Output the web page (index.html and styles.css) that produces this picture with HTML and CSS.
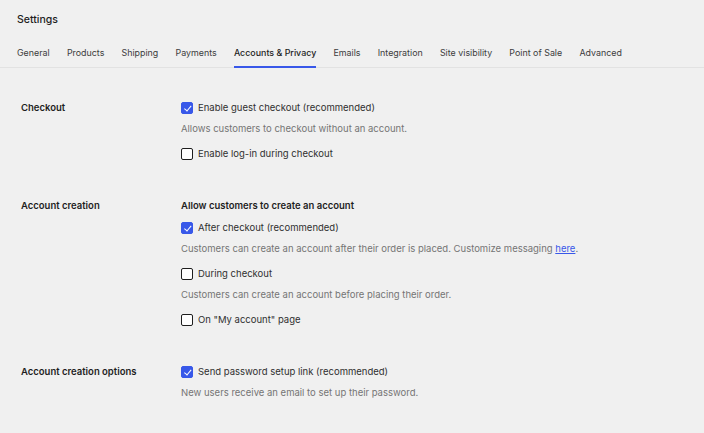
FILE: index.html
```html
<!DOCTYPE html>
<html>
<head>
<meta charset="utf-8">
<link rel="stylesheet" href="styles.css">
</head>
<body>
<header class="header">
  <h1 class="title">Settings</h1>
  <nav class="tabs">
    <a class="tab">General</a>
    <a class="tab">Products</a>
    <a class="tab">Shipping</a>
    <a class="tab">Payments</a>
    <a class="tab active">Accounts &amp; Privacy</a>
    <a class="tab">Emails</a>
    <a class="tab">Integration</a>
    <a class="tab">Site visibility</a>
    <a class="tab">Point of Sale</a>
    <a class="tab">Advanced</a>
  </nav>
</header>
<main class="content">
  <section class="row">
    <div class="label">Checkout</div>
    <div class="fields">
      <label class="check"><span class="box on"></span>Enable guest checkout (recommended)</label>
      <p class="desc">Allows customers to checkout without an account.</p>
      <label class="check"><span class="box"></span>Enable log-in during checkout</label>
    </div>
  </section>
  <section class="row">
    <div class="label">Account creation</div>
    <div class="fields">
      <div class="subhead">Allow customers to create an account</div>
      <label class="check"><span class="box on"></span>After checkout (recommended)</label>
      <p class="desc">Customers can create an account after their order is placed. Customize messaging <a class="link">here</a>.</p>
      <label class="check"><span class="box"></span>During checkout</label>
      <p class="desc">Customers can create an account before placing their order.</p>
      <label class="check"><span class="box"></span>On "My account" page</label>
    </div>
  </section>
  <section class="row">
    <div class="label">Account creation options</div>
    <div class="fields">
      <label class="check"><span class="box on"></span>Send password setup link (recommended)</label>
      <p class="desc">New users receive an email to set up their password.</p>
    </div>
  </section>
</main>
</body>
</html>
```
FILE: styles.css
```css
html, body {
  margin: 0;
  padding: 0;
  background: #f0f0f0;
  font-family: Inter, "Noto Sans", sans-serif;
  color: #1e1e1e;
}
.header {
  border-bottom: 1px solid #e2e2e2;
  padding: 0 17px;
}
.title {
  margin: 0;
  padding-top: 13px;
  height: 27px;
  font-size: 10.5px;
  font-weight: 500;
  line-height: 14px;
}
.tabs {
  display: flex;
  gap: 17.2px;
}
.tab {
  font-size: 8.9px;
  color: #3c3c3c;
  line-height: 12px;
  padding: 7px 0 7px;
  border-bottom: 2px solid transparent;
  margin-bottom: -1px;
}
.tab.active {
  color: #1e1e1e;
  font-weight: 500;
  border-bottom-color: #3858e9;
}
.content {
  padding: 30px 21px 0;
}
.row {
  display: flex;
  margin-bottom: 32px;
}
.label {
  width: 160px;
  font-size: 9.5px;
  font-weight: 600;
  line-height: 14px;
  padding-top: 3px;
}
.fields {
  display: flex;
  flex-direction: column;
}
.subhead {
  font-size: 9.5px;
  font-weight: 600;
  line-height: 14px;
  padding-top: 3px;
  margin-bottom: 5px;
}
.check {
  display: flex;
  align-items: center;
  gap: 5px;
  font-size: 9.5px;
  line-height: 20px;
  color: #2f2f2f;
}
.box {
  width: 10px;
  height: 10px;
  border: 1px solid #1e1e1e;
  border-radius: 2px;
  background: #fff;
  position: relative;
}
.box.on {
  background: #3858e9;
  border-color: #3858e9;
}
.box.on::after {
  content: "";
  position: absolute;
  left: 3.5px;
  top: 1px;
  width: 2.5px;
  height: 5.5px;
  border: solid #fff;
  border-width: 0 1.6px 1.6px 0;
  transform: rotate(40deg);
}
.desc {
  margin: 1px 0 5px;
  font-size: 9.5px;
  line-height: 20px;
  color: #757575;
}
.link {
  color: #3858e9;
  text-decoration: underline;
}
```
